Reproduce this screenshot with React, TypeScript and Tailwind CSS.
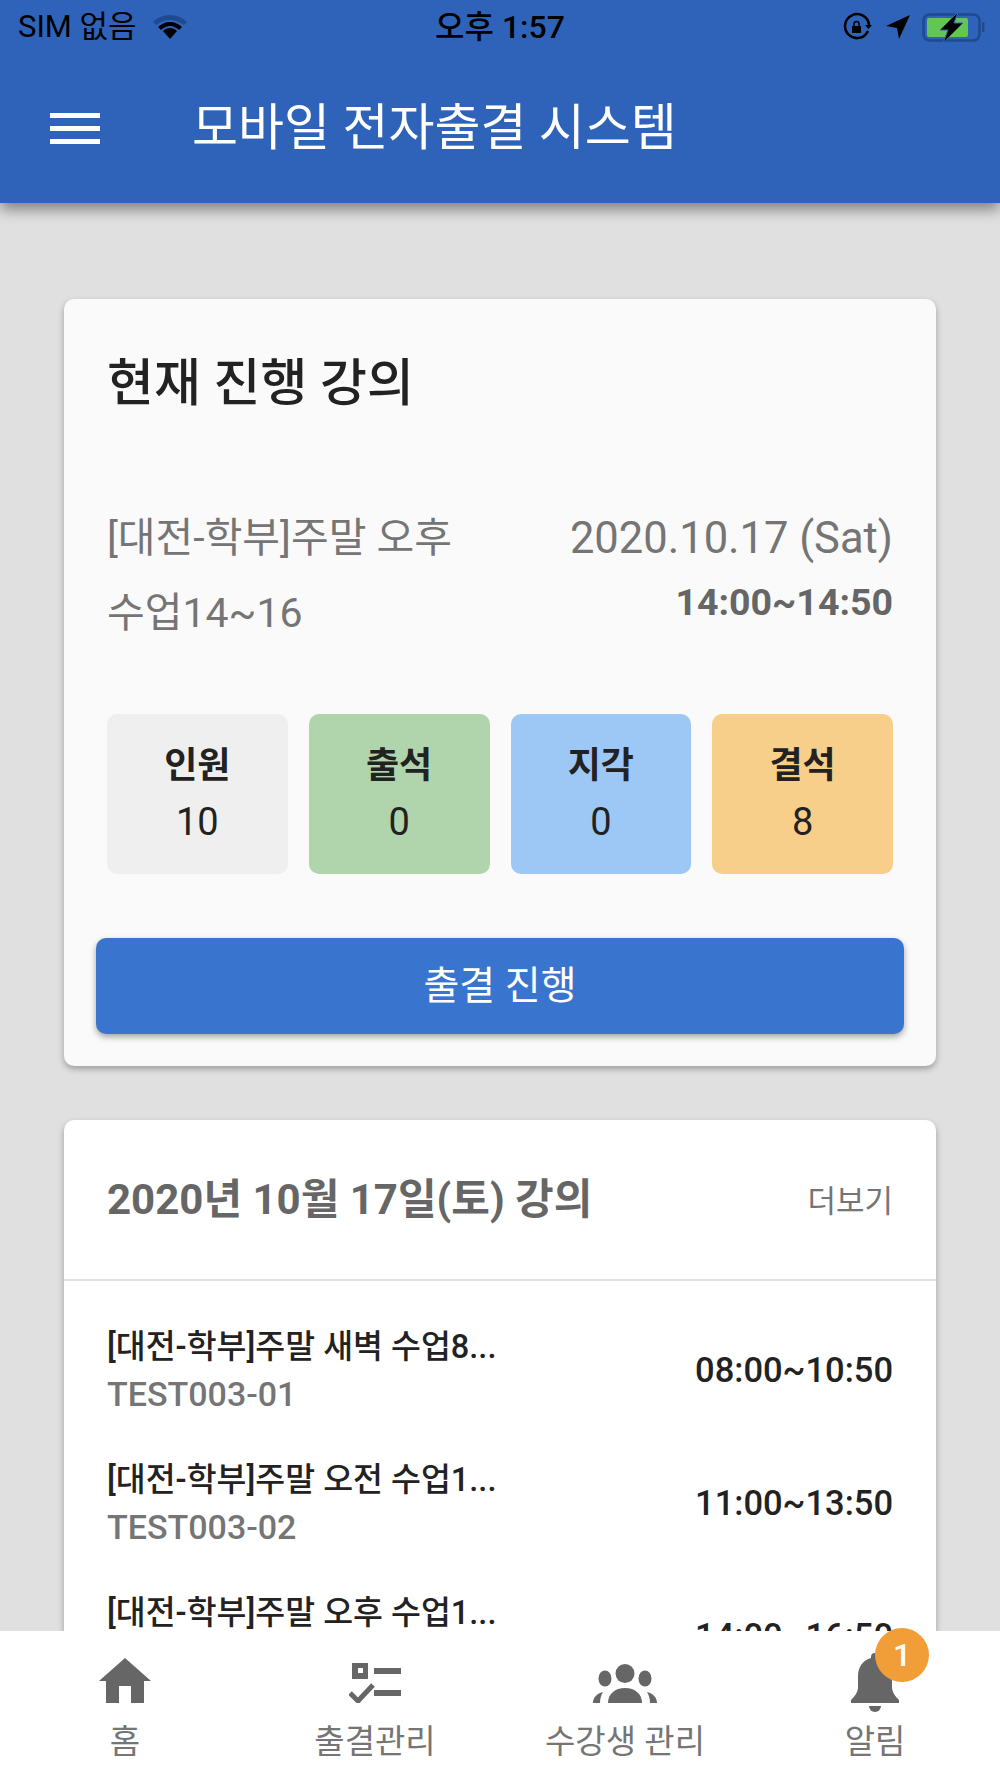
const stats = [
  { label: '인원', value: 10, bg: 'bg-[#efefef]' },
  { label: '출석', value: 0, bg: 'bg-[#b0d4ac]' },
  { label: '지각', value: 0, bg: 'bg-[#9dc8f6]' },
  { label: '결석', value: 8, bg: 'bg-[#f8ce8b]' },
]

const lectures = [
  { title: '[대전-학부]주말 새벽 수업8...', code: 'TEST003-01', time: '08:00~10:50' },
  { title: '[대전-학부]주말 오전 수업1...', code: 'TEST003-02', time: '11:00~13:50' },
  { title: '[대전-학부]주말 오후 수업1...', code: 'TEST003-03', time: '14:00~16:50' },
]

const HomeIcon = () => (
  <svg width="54" height="45" viewBox="0 0 54 45" fill="#666">
    <path d="M27 0L53 23H46V45H33V28H21V45H8V23H1z" />
  </svg>
)

const ChecklistIcon = () => (
  <svg width="52" height="40" viewBox="0 0 52 40" fill="#666">
    <path fillRule="evenodd" d="M3 0h16v16H3zM9 5v5h5V5z" />
    <rect x="25" y="5" width="27" height="6" />
    <rect x="25" y="27" width="27" height="6" />
    <path d="M1 30l8 8 15-16" fill="none" stroke="#666" strokeWidth="5" />
  </svg>
)

const PeopleIcon = () => (
  <svg width="64" height="39" viewBox="0 0 64 39" fill="#666">
    <circle cx="32" cy="9.500" r="9.500" />
    <ellipse cx="12" cy="14.500" rx="6.500" ry="8" />
    <ellipse cx="52" cy="14.500" rx="6.500" ry="8" />
    <path d="M15 39c0-9 7-15 17-15s17 6 17 15z" />
    <path d="M0 39c0-5 3-9 10-11-2 3-3 7-3 11z" />
    <path d="M64 39c0-5-3-9-10-11 2 3 3 7 3 11z" />
  </svg>
)

const BellIcon = () => (
  <svg width="48" height="59" viewBox="0 0 48 59" fill="#666" className="-mb-[9px]">
    <path d="M24 0a4 4 0 0 1 4 4v1c8 2 13 9 13 18v11c0 5 3 9 7 13v3H0v-3c4-4 7-8 7-13V23c0-9 5-16 13-18V4a4 4 0 0 1 4-4z" />
    <path d="M18 53h12a6 6 0 0 1-12 0z" />
  </svg>
)

const StatusBar = () => (
  <div className="flex items-center justify-between h-[54px] pl-[18px] pr-[14px] text-[31px] text-black">
    <div className="flex items-center gap-[15px] w-[296px]">
      <span>SIM 없음</span>
      <svg width="36" height="28" viewBox="0 0 36 28">
        <path d="M18 2C11 2 5 5 1 9l3 3c4-3 9-5 14-5s10 2 14 5l3-3C31 5 25 2 18 2z" fill="#1f4a8f" />
        <path d="M18 9c-5 0-9 2-12 5l3 3c2-2 6-4 9-4s7 2 9 4l3-3c-3-3-7-5-12-5z" fill="#000" />
        <path d="M18 15c-3 0-5 1-7 3l7 8 7-8c-2-2-4-3-7-3z" fill="#000" />
      </svg>
    </div>
    <span className="text-[32px] font-medium">오후 1:57</span>
    <div className="flex items-center justify-end w-[300px]">
      <svg width="30" height="30" viewBox="0 0 30 30" fill="none" stroke="#000" strokeWidth="2.500">
        <path d="M26 19a12 12 0 1 1 1-6" />
        <path d="M23 13h7l-3.500 4z" fill="#000" stroke="none" />
        <rect x="10" y="14" width="9" height="7" fill="#000" stroke="none" />
        <path d="M12 14v-2a2.500 2.500 0 0 1 5 0v2" strokeWidth="1.500" />
      </svg>
      <svg width="26" height="26" viewBox="0 0 26 26" fill="#000" className="ml-[13px]">
        <path d="M25 1L1 12l11 2 2 11z" />
      </svg>
      <svg width="64" height="33" viewBox="0 0 64 33" className="ml-[11px]">
        <rect x="1.500" y="3.500" width="56" height="26" rx="6" fill="none" stroke="#1f4a8f" strokeWidth="2.500" />
        <rect x="5" y="7" width="41" height="19" rx="2" fill="#62c554" />
        <rect x="60" y="11" width="2.500" height="10" rx="1" fill="#1f4a8f" />
        <path d="M36 1L18 19h8l-5 13 20-20h-9l4-11z" fill="#000" stroke="#2f63b9" strokeWidth="1" />
      </svg>
    </div>
  </div>
)

export default function App() {
  return (
    <div
      className="relative flex flex-col h-[1778px] w-[1000px] overflow-hidden bg-[#e0e0e0]"
      style={{ fontFamily: 'Roboto, "Noto Sans CJK KR", sans-serif' }}
    >
      <header className="relative z-10 h-[203px] shrink-0 bg-[#2f63b9] shadow-[0_6px_14px_rgba(0,0,0,0.45)]">
        <StatusBar />
        <div className="flex items-center h-[149px] pl-[50px]">
          <div className="flex flex-col gap-[8px] w-[50px]">
            <div className="h-[5px] bg-white" />
            <div className="h-[5px] bg-white" />
            <div className="h-[5px] bg-white" />
          </div>
          <h1 className="ml-[92px] text-[50px] font-normal text-white">모바일 전자출결 시스템</h1>
        </div>
      </header>

      <main className="flex-1 min-h-0 overflow-hidden px-[64px] pt-[96px]">
        <section className="rounded-[10px] bg-[#fafafa] shadow-[0_3px_6px_rgba(0,0,0,0.3)] h-[767px] px-[43px] pt-[53px]">
          <h2 className="text-[51px] font-medium leading-[64px] text-[#222]">현재 진행 강의</h2>
          <div className="flex justify-between mt-[85px] text-[41px] text-[#757575]">
            <div className="w-[370px] leading-[75px]">[대전-학부]주말 오후 수업14~16</div>
            <div className="text-right">
              <div className="text-[43.5px] leading-[75px]">2020.10.17 (Sat)</div>
              <div className="text-[37.5px] font-bold leading-[52px] text-[#666]">14:00~14:50</div>
            </div>
          </div>
          <div className="grid grid-cols-4 gap-[21px] mt-[63px]">
            {stats.map((s) => (
              <div key={s.label} className={`flex flex-col items-center h-[160px] rounded-[10px] pt-[27px] text-[#222] ${s.bg}`}>
                <span className="text-[36px] font-bold leading-[50px]">{s.label}</span>
                <span className="text-[38px] leading-[56px] mt-[3px]">{s.value}</span>
              </div>
            ))}
          </div>
          <button className="flex items-center justify-center w-[808px] h-[96px] -ml-[11px] mt-[64px] rounded-[10px] bg-[#3974ce] text-[39px] text-white shadow-[0_3px_6px_rgba(0,0,0,0.35)]">
            출결 진행
          </button>
        </section>

        <section className="mt-[54px] rounded-[10px] bg-white shadow-[0_3px_6px_rgba(0,0,0,0.3)]">
          <div className="flex items-center justify-between h-[161px] px-[43px] border-b-2 border-[#e2e2e2]">
            <h3 className="text-[42px] font-bold text-[#666]">2020년 10월 17일(토) 강의</h3>
            <span className="text-[31px] text-[#757575] mt-[5px]">더보기</span>
          </div>
          <ul className="px-[43px] pt-[22px]">
            {lectures.map((l) => (
              <li key={l.code} className="flex items-center justify-between h-[133px]">
                <div>
                  <div className="text-[32.5px] font-medium leading-[48px] text-[#222]">{l.title}</div>
                  <div className="text-[34px] font-medium leading-[46px] text-[#757575]">{l.code}</div>
                </div>
                <span className="text-[34.5px] font-medium text-[#222] mt-[2px]">{l.time}</span>
              </li>
            ))}
          </ul>
        </section>
      </main>

      <nav className="relative z-10 grid grid-cols-4 shrink-0 h-[147px] bg-white text-[#757575]">
        <div className="flex flex-col items-center pt-[12px]">
          <div className="flex items-end h-[60px]"><HomeIcon /></div>
          <span className="text-[33px] leading-[44px] mt-[17px]">홈</span>
        </div>
        <div className="flex flex-col items-center pt-[12px]">
          <div className="flex items-end h-[60px]"><ChecklistIcon /></div>
          <span className="text-[33px] leading-[44px] mt-[17px]">출결관리</span>
        </div>
        <div className="flex flex-col items-center pt-[12px]">
          <div className="flex items-end h-[60px]"><PeopleIcon /></div>
          <span className="text-[33px] leading-[44px] mt-[17px]">수강생 관리</span>
        </div>
        <div className="flex flex-col items-center pt-[12px]">
          <div className="flex items-end h-[60px]">
            <div className="relative">
              <BellIcon />
              <span className="absolute -top-[25px] left-[24px] flex items-center justify-center w-[54px] h-[54px] rounded-full bg-[#f19e38] text-[32px] font-medium text-white">1</span>
            </div>
          </div>
          <span className="text-[33px] leading-[44px] mt-[17px]">알림</span>
        </div>
      </nav>
    </div>
  )
}
